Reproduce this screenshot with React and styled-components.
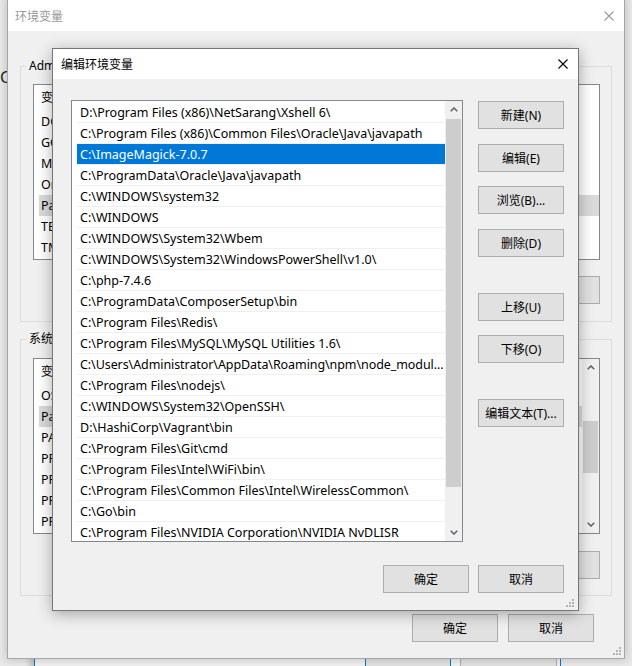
import styled, { createGlobalStyle } from "styled-components";

const uiFont = `"Noto Sans", "Noto Sans CJK SC", sans-serif`;

const GlobalStyle = createGlobalStyle`
  html, body {
    margin: 0;
    padding: 0;
  }
  body {
    background: #e9e9e9;
    font-family: ${uiFont};
    font-size: 12px;
    color: #000;
  }
  * {
    box-sizing: border-box;
  }
`;

const pathItems = [
	"D:\\Program Files (x86)\\NetSarang\\Xshell 6\\",
	"C:\\Program Files (x86)\\Common Files\\Oracle\\Java\\javapath",
	"C:\\ImageMagick-7.0.7",
	"C:\\ProgramData\\Oracle\\Java\\javapath",
	"C:\\WINDOWS\\system32",
	"C:\\WINDOWS",
	"C:\\WINDOWS\\System32\\Wbem",
	"C:\\WINDOWS\\System32\\WindowsPowerShell\\v1.0\\",
	"C:\\php-7.4.6",
	"C:\\ProgramData\\ComposerSetup\\bin",
	"C:\\Program Files\\Redis\\",
	"C:\\Program Files\\MySQL\\MySQL Utilities 1.6\\",
	"C:\\Users\\Administrator\\AppData\\Roaming\\npm\\node_modul...",
	"C:\\Program Files\\nodejs\\",
	"C:\\WINDOWS\\System32\\OpenSSH\\",
	"D:\\HashiCorp\\Vagrant\\bin",
	"C:\\Program Files\\Git\\cmd",
	"C:\\Program Files\\Intel\\WiFi\\bin\\",
	"C:\\Program Files\\Common Files\\Intel\\WirelessCommon\\",
	"C:\\Go\\bin",
	"C:\\Program Files\\NVIDIA Corporation\\NVIDIA NvDLISR",
];

const userVars = ["DOCKER_TOOLBOX_INSTALL_PATH", "GOPATH", "MAVEN_HOME", "OneDrive", "Path", "TEMP", "TMP"];
const systemVars = [
	"OS",
	"Path",
	"PATHEXT",
	"PROCESSOR_ARCHITECTURE",
	"PROCESSOR_IDENTIFIER",
	"PROCESSOR_LEVEL",
	"PROCESSOR_REVISION",
];

const sideButtons = [
	{ label: "新建(N)", mt: 1 },
	{ label: "编辑(E)", mt: 15 },
	{ label: "浏览(B)...", mt: 14 },
	{ label: "删除(D)", mt: 15 },
	{ label: "上移(U)", mt: 36 },
	{ label: "下移(O)", mt: 14 },
	{ label: "编辑文本(T)...", mt: 36 },
];

/* ---------- desktop & windows ---------- */

const Desktop = styled.div`
	position: relative;
	width: 632px;
	height: 666px;
	overflow: hidden;
	background: #e9e9e9;
`;

const BehindGlyph = styled.span`
	position: absolute;
	left: 0;
	top: 66px;
	font-size: 16px;
	color: #1e1e1e;
`;

const LowerWindow = styled.div`
	position: absolute;
	left: 34px;
	top: 600px;
	width: 527px;
	height: 80px;
	display: flex;
	gap: 9px;
	padding: 57px 0 0 330px;
	background: #f0f0f0;
	border-left: 1px solid #0078d7;
	border-right: 1px solid #0078d7;
	box-shadow: -4px 0 6px rgba(0, 0, 0, 0.18);
`;

const LowerButton = styled.div`
	width: ${(p) => p.$w}px;
	height: 28px;
	background: #e1e1e1;
	border: 1px solid ${(p) => (p.$focused ? "#0078d7" : "#adadad")};
`;

const Window = styled.div`
	position: absolute;
	left: ${(p) => p.$left}px;
	top: ${(p) => p.$top}px;
	width: ${(p) => p.$width}px;
	height: ${(p) => p.$height}px;
	display: flex;
	flex-direction: column;
	background: #f0f0f0;
	border: 1px solid ${(p) => p.$border};
	box-shadow: ${(p) => p.$shadow};
`;

const TitleBar = styled.div`
	height: ${(p) => p.$h}px;
	flex: none;
	display: flex;
	align-items: center;
	justify-content: space-between;
	padding-left: ${(p) => p.$pl}px;
	background: #fff;
	color: ${(p) => (p.$active ? "#000" : "#9a9a9a")};
	font-size: 12px;
`;

const CloseButton = styled.div`
	width: 30px;
	height: 100%;
	display: flex;
	align-items: center;
	justify-content: center;
`;

const Grip = styled.svg`
	position: absolute;
	right: ${(p) => p.$r}px;
	bottom: ${(p) => p.$b}px;
`;

/* ---------- outer window parts ---------- */

const GroupBox = styled.fieldset`
	margin: ${(p) => p.$mt}px 12px 0;
	padding: 0;
	min-width: 0;
	border: 1px solid #dcdcdc;
`;

const GroupLabel = styled.legend`
	margin-left: 5px;
	padding: 0 3px;
	font-size: 12px;
	line-height: 16px;
`;

const GroupBody = styled.div`
	padding: ${(p) => p.$pt}px 11px ${(p) => p.$pb}px 12px;
`;

const ButtonRow = styled.div`
	display: flex;
	justify-content: flex-end;
	gap: ${(p) => p.$gap}px;
	margin-top: ${(p) => p.$mt}px;
	padding-right: ${(p) => p.$pr || 0}px;
`;

const Button = styled.button`
	width: 86px;
	height: 28px;
	flex: none;
	margin: ${(p) => p.$mt || 0}px 0 0;
	padding: 0;
	background: #e1e1e1;
	border: 1px solid #adadad;
	border-radius: 0;
	font-family: ${uiFont};
	font-size: 12px;
	color: #000;
	white-space: nowrap;
`;

const ListBox = styled.div`
	width: ${(p) => (p.$w ? `${p.$w}px` : "100%")};
	height: ${(p) => p.$h}px;
	display: flex;
	overflow: hidden;
	background: #fff;
	border: 1px solid #828790;
`;

const TableArea = styled.div`
	flex: 1;
	min-width: 0;
	padding-left: 5px;
	overflow: hidden;
	font-size: 12.5px;
`;

const TableHeader = styled.div`
	height: 26px;
	line-height: 26px;
	padding-left: 2px;
	font-size: 12px;
`;

const TableRow = styled.div`
	height: 21px;
	line-height: 21px;
	padding-left: 2px;
	white-space: nowrap;
	background: ${(p) => (p.$selected ? "#dadada" : "transparent")};
`;

/* ---------- edit dialog parts ---------- */

const DialogBody = styled.div`
	flex: 1;
	display: flex;
	flex-direction: column;
	padding: 21px 14px 17px 18px;
`;

const MainArea = styled.div`
	display: flex;
	gap: 15px;
`;

const ButtonColumn = styled.div`
	display: flex;
	flex-direction: column;
`;

const PathRows = styled.div`
	flex: 1;
	min-width: 0;
	padding: 1px 0 0 5px;
	overflow: hidden;
	font-size: 12.5px;
`;

const PathRow = styled.div`
	height: 21px;
	line-height: 22px;
	padding-left: 3px;
	white-space: nowrap;
	overflow: hidden;
	letter-spacing: ${(p) => (p.$tight ? "-0.08px" : "normal")};
	border-bottom: 1px solid #f0f0f0;
	background: ${(p) => (p.$selected ? "#0078d7" : "#fff")};
	color: ${(p) => (p.$selected ? "#fff" : "#000")};
`;

const ScrollBar = styled.div`
	width: 17px;
	flex: none;
	display: flex;
	flex-direction: column;
	background: #f0f0f0;
`;

const ScrollArrow = styled.div`
	height: 17px;
	flex: none;
	display: flex;
	align-items: center;
	justify-content: center;
`;

const ScrollTrack = styled.div`
	flex: 1;
	padding: 0 1px;
`;

const ScrollThumb = styled.div`
	background: #cdcdcd;
`;

/* ---------- small drawings ---------- */

const CrossIcon = ({ color }) => (
	<svg width="10" height="10" viewBox="0 0 10 10">
		<path d="M0.5 0.5 L9.5 9.5 M9.5 0.5 L0.5 9.5" stroke={color} strokeWidth="1.1" fill="none" />
	</svg>
);

const Chevron = ({ down }) => (
	<svg width="8" height="5" viewBox="0 0 8 5">
		<polyline
			points={down ? "0.7,0.8 4,4 7.3,0.8" : "0.7,4.2 4,1 7.3,4.2"}
			stroke="#606060"
			strokeWidth="1.5"
			fill="none"
		/>
	</svg>
);

const SizeGrip = ({ r, b }) => (
	<Grip $r={r} $b={b} width="9" height="9" viewBox="0 0 9 9">
		{[
			[7, 1],
			[4, 4],
			[7, 4],
			[1, 7],
			[4, 7],
			[7, 7],
		].map(([x, y]) => (
			<rect key={`${x}-${y}`} x={x - 1} y={y - 1} width="2" height="2" fill="#b4b4b4" />
		))}
	</Grip>
);

const Scroller = ({ thumbTop, thumbHeight }) => (
	<ScrollBar>
		<ScrollArrow>
			<Chevron />
		</ScrollArrow>
		<ScrollTrack>
			<ScrollThumb style={{ marginTop: thumbTop, height: thumbHeight }} />
		</ScrollTrack>
		<ScrollArrow>
			<Chevron down />
		</ScrollArrow>
	</ScrollBar>
);

const VarTable = ({ names, selected, scroll }) => (
	<ListBox $h={176}>
		<TableArea>
			<TableHeader>变量</TableHeader>
			{names.map((n) => (
				<TableRow key={n} $selected={n === selected}>
					{n}
				</TableRow>
			))}
		</TableArea>
		{scroll && <Scroller thumbTop={45} thumbHeight={52} />}
	</ListBox>
);

const App = () => {
	return (
		<>
			<GlobalStyle />
			<Desktop>
				<BehindGlyph>C</BehindGlyph>
				<LowerWindow>
					<LowerButton $w={86} $focused />
					<LowerButton $w={97} />
				</LowerWindow>

				{/* 环境变量 window (inactive, behind) */}
				<Window
					$left={7}
					$top={-1}
					$width={618}
					$height={660}
					$border="#a6a6a6"
					$shadow="0 0 9px rgba(0, 0, 0, 0.22)"
				>
					<TitleBar $h={31} $pl={7}>
						<span>环境变量</span>
						<CloseButton>
							<CrossIcon color="#999" />
						</CloseButton>
					</TitleBar>

					<GroupBox $mt={27}>
						<GroupLabel>Administrator 的用户变量(U)</GroupLabel>
						<GroupBody $pt={10} $pb={17}>
							<VarTable names={userVars} selected="Path" />
							<ButtonRow $gap={10} $mt={16}>
								<Button>新建(N)...</Button>
								<Button>编辑(E)...</Button>
								<Button>删除(D)</Button>
							</ButtonRow>
						</GroupBody>
					</GroupBox>

					<GroupBox $mt={9}>
						<GroupLabel>系统变量(S)</GroupLabel>
						<GroupBody $pt={11} $pb={16}>
							<VarTable names={systemVars} selected="Path" scroll />
							<ButtonRow $gap={10} $mt={17}>
								<Button>新建(W)...</Button>
								<Button>编辑(I)...</Button>
								<Button>删除(L)</Button>
							</ButtonRow>
						</GroupBody>
					</GroupBox>

					<ButtonRow $gap={10} $mt={18} $pr={30}>
						<Button>确定</Button>
						<Button>取消</Button>
					</ButtonRow>
					<SizeGrip r={2} b={2} />
				</Window>

				{/* 编辑环境变量 dialog (active) */}
				<Window
					$left={52}
					$top={48}
					$width={527}
					$height={563}
					$border="#767676"
					$shadow="0 3px 14px rgba(0, 0, 0, 0.32)"
				>
					<TitleBar $h={30} $pl={8} $active>
						<span>编辑环境变量</span>
						<CloseButton>
							<CrossIcon color="#000" />
						</CloseButton>
					</TitleBar>
					<DialogBody>
						<MainArea>
							<ListBox $w={392} $h={442}>
								<PathRows>
									{pathItems.map((p, i) => (
										<PathRow key={p} $selected={i === 2} $tight={p.endsWith("...")}>
											{p}
										</PathRow>
									))}
								</PathRows>
								<Scroller thumbTop={1} thumbHeight={368} />
							</ListBox>
							<ButtonColumn>
								{sideButtons.map((b) => (
									<Button key={b.label} $mt={b.mt}>
										{b.label}
									</Button>
								))}
							</ButtonColumn>
						</MainArea>
						<ButtonRow $gap={9} $mt={23}>
							<Button>确定</Button>
							<Button>取消</Button>
						</ButtonRow>
					</DialogBody>
					<SizeGrip r={3} b={2} />
				</Window>
			</Desktop>
		</>
	);
};

export default App;
